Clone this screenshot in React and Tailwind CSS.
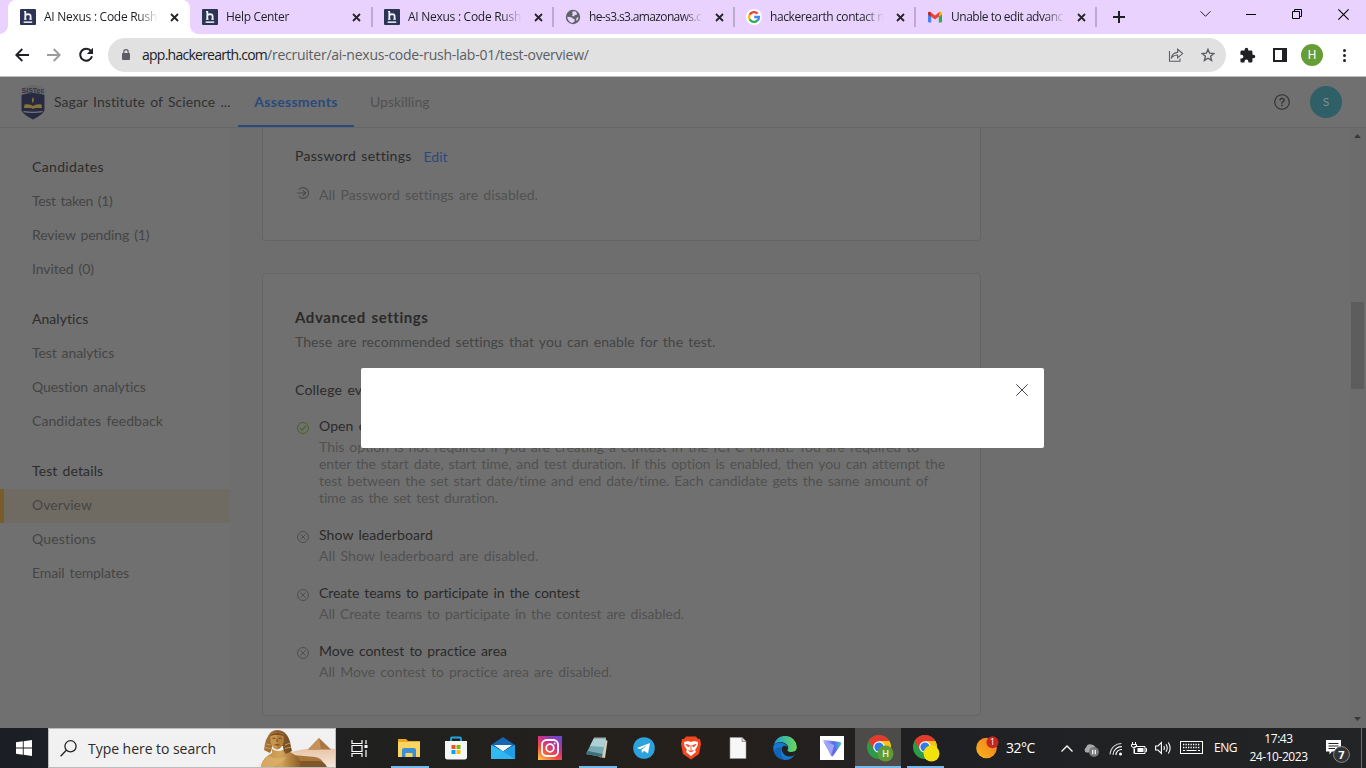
import React from "react";

const fontPage = "font-['Lato','Liberation_Sans',sans-serif] [word-spacing:1.5px] [font-variant-ligatures:none]";
const fontSys = "font-['Open_Sans','Noto_Sans',sans-serif]";

/* ---------- Browser chrome ---------- */

function HackerIcon() {
  return (
    <svg className="size-4 shrink-0" viewBox="0 0 16 16">
      <rect width="16" height="16" rx="1" fill="#2c3454" />
      <path d="M5.3 2.2V10.6M5.3 7Q5.6 5.2 8 5.1Q10.6 5.1 10.6 7.3V10.6" fill="none" stroke="#f4f0fb" strokeWidth="1.8" />
      <path d="M4 2.6H6M4 10.2H6.6M9.3 10.2H11.8" stroke="#f4f0fb" strokeWidth="1" />
      <rect x="3.6" y="12.4" width="8.6" height="1.5" fill="#f4f0fb" />
    </svg>
  );
}

function GlobeIcon() {
  return (
    <svg className="size-4 shrink-0" viewBox="0 0 16 16">
      <circle cx="8" cy="8" r="7.2" fill="#5f6368" />
      <path d="M2.2 7.8L6 8.2Q7.6 8.3 7.8 9.6L9.6 10.2V12.6L7.2 13.9Q3 13.4 2.2 7.8ZM8 2.2L10.8 2.6L12.2 5Q11.6 6.4 9.8 6L9.2 7.4L6.6 6.4L8 5.2L7 4ZM12 8.6L13.6 8.2Q13.2 10.8 11.8 12L11 10.4Z" fill="#e9d3fe" />
    </svg>
  );
}

function GoogleIcon() {
  return (
    <svg className="size-4 shrink-0" viewBox="0 0 16 16">
      <circle cx="8" cy="8" r="8" fill="#fff" />
      <g fill="none" strokeWidth="2.3">
        <path d="M11.6 4.6A5 5 0 0 0 3.6 5.7" stroke="#ea4335" />
        <path d="M3.6 5.7A5 5 0 0 0 3.6 10.3" stroke="#fbbc05" />
        <path d="M3.6 10.3A5 5 0 0 0 11.3 11.7" stroke="#34a853" />
        <path d="M11.3 11.7A5 5 0 0 0 13 8H8.2" stroke="#4285f4" />
      </g>
    </svg>
  );
}

function GmailIcon() {
  return (
    <svg className="size-4 shrink-0" viewBox="0 0 16 16">
      <path d="M1 4V12.4A1 1 0 0 0 2 13.4H4.2V6.4Z" fill="#4285f4" />
      <path d="M15 4V12.4A1 1 0 0 1 14 13.4H11.8V6.4Z" fill="#34a853" />
      <path d="M11.8 4V7.8L15 5.4V4A1.6 1.6 0 0 0 12.4 2.9Z" fill="#fbbc04" />
      <path d="M1 4V5.4L4.2 7.8V4L3.4 2.9A1.6 1.6 0 0 0 1 4Z" fill="#c5221f" />
      <path d="M3.2 2.8L8 6.5L12.8 2.8L11.8 7.8L8 10.6L4.2 7.8Z" fill="#ea4335" />
    </svg>
  );
}

const tabs = [
  { Icon: HackerIcon, text: "AI Nexus : Code Rush", w: "w-[182px]", track: "tracking-[-0.27px]", active: true },
  { Icon: HackerIcon, text: "Help Center", w: "w-[182px]", track: "tracking-[-0.33px]" },
  { Icon: HackerIcon, text: "AI Nexus : Code Rush", w: "w-[181px]", track: "tracking-[-0.27px]" },
  { Icon: GlobeIcon, text: "he-s3.s3.amazonaws.c", w: "w-[181px]", track: "tracking-[-0.63px]" },
  { Icon: GoogleIcon, text: "hackerearth contact n", w: "w-[181px]", track: "tracking-[-0.4px]" },
  { Icon: GmailIcon, text: "Unable to edit advanc", w: "w-[181px]", track: "tracking-[-0.48px]" },
];

function TabStrip() {
  return (
    <div className="flex h-[34px] shrink-0 bg-[#e9d3fe] pl-2">
      {tabs.map(({ Icon, text, w, active, track }, i) => (
        <div key={i} className={`relative flex h-full shrink-0 items-center pl-3 ${w} ${active ? "rounded-t-lg bg-white" : ""}`}>
          {active && (
            <>
              <span className="absolute bottom-0 -left-2 size-2 bg-[radial-gradient(circle_at_0_0,transparent_7.5px,white_8px)]" />
              <span className="absolute -right-2 bottom-0 size-2 bg-[radial-gradient(circle_at_100%_0,transparent_7.5px,white_8px)]" />
            </>
          )}
          <Icon />
          <span className={`ml-2 w-[114px] shrink-0 mask-r-from-82% text-[12px] whitespace-nowrap text-[#1f1f24] ${track}`}>{text}</span>
          <svg className="ml-[12px] size-[9px] shrink-0" viewBox="0 0 9 9">
            <path d="M1 1L8 8M8 1L1 8" stroke="#26242b" strokeWidth="1.8" />
          </svg>
          {i > 0 && <span className="absolute top-[7px] right-0 h-5 w-px translate-x-1/2 bg-[#8f829f]" />}
        </div>
      ))}
      <svg className="mt-[11px] ml-[17px] size-3" viewBox="0 0 12 12">
        <path d="M6 0V12M0 6H12" stroke="#1f1f24" strokeWidth="2" />
      </svg>
      <svg className="mt-[11px] ml-[75px] h-[6px] w-[11px]" viewBox="0 0 11 6">
        <path d="M.5 .3L5.5 5.3L10.5 .3" fill="none" stroke="#222" />
      </svg>
      <svg className="mt-[14px] ml-[35px] h-px w-[10px]" viewBox="0 0 10 1">
        <path d="M0 .5H10" stroke="#000" />
      </svg>
      <svg className="mt-[9px] ml-[36px] size-[10px]" viewBox="0 0 10 10">
        <path d="M.5 2.5H7.5V9.5H.5ZM2.5 2.5V.5H9.5V7.5H7.5" fill="none" stroke="#000" />
      </svg>
      <svg className="mt-[9px] ml-[36px] size-[11px]" viewBox="0 0 11 11">
        <path d="M.4 .4L10.6 10.6M10.6 .4L.4 10.6" stroke="#000" strokeWidth="1.1" />
      </svg>
    </div>
  );
}

function Toolbar() {
  return (
    <div className="flex h-[43px] shrink-0 items-center border-b border-[#bfc0c3] bg-white pl-[15px]">
      <svg className="h-[14px] w-[14px]" viewBox="0 0 14 14">
        <path d="M14 7H1.5M7.3 1L1.3 7L7.3 13" fill="none" stroke="#202124" strokeWidth="1.9" />
      </svg>
      <svg className="ml-[18px] h-[14px] w-[14px]" viewBox="0 0 14 14">
        <path d="M0 7H12.5M6.7 1L12.7 7L6.7 13" fill="none" stroke="#9b9b9e" strokeWidth="1.9" />
      </svg>
      <svg className="ml-[17px] size-4" viewBox="0 0 16 16">
        <path d="M13.1 4.2A6 6 0 1 0 14 9.3" fill="none" stroke="#202124" strokeWidth="2" />
        <path d="M15 .8V7H8.8Z" fill="#202124" />
      </svg>
      <div className="ml-[14px] flex h-[34px] w-[1118px] items-center rounded-full bg-[#e1e1e1] pl-[14px]">
        <svg className="-mt-px h-[11px] w-2" viewBox="0 0 8 11">
          <rect y="4" width="8" height="7" rx=".8" fill="#5b5e63" />
          <path d="M1.8 4.4V2.8A2.2 2.2 0 0 1 6.2 2.8V4.4" fill="none" stroke="#5b5e63" strokeWidth="1.2" />
        </svg>
        <span className="-mt-px ml-3 text-[14px] whitespace-nowrap text-[#5b5e63]">
          <span className="tracking-[-0.75px] text-[#202124]">app.hackerearth.com</span>
          <span className="tracking-[-0.25px]">/recruiter/ai-nexus-code-rush-lab-01/test-overview/</span>
        </span>
        <svg className="ml-auto h-[14px] w-4" viewBox="0 0 16 14">
          <path d="M1.5 3V13.3H12V10.5M3.6 9.6Q4.4 4.8 9.6 4.4V1.3L14.6 5.6L9.6 9.8V7Q6 6.9 3.6 9.6Z" fill="none" stroke="#5b5e63" strokeWidth="1.1" />
        </svg>
        <svg className="mr-[11px] ml-[17px] size-[14px]" viewBox="0 0 14 14">
          <path d="M7 1.4L8.6 5.2L12.8 5.6L9.6 8.3L10.6 12.4L7 10.2L3.4 12.4L4.4 8.3L1.2 5.6L5.4 5.2Z" fill="none" stroke="#5b5e63" strokeWidth="1.4" />
        </svg>
      </div>
      <svg className="ml-[13px] size-[17px]" viewBox="0 0 24 24">
        <path fill="#202124" d="M20.5 11H19V7a2 2 0 0 0-2-2h-4V3.500a2.500 2.500 0 0 0-5 0V5H4a2 2 0 0 0-2 2v3.800h1.500a2.700 2.700 0 0 1 0 5.400H2V20a2 2 0 0 0 2 2h3.800v-1.500a2.700 2.700 0 0 1 5.400 0V22H17a2 2 0 0 0 2-2v-4h1.500a2.500 2.500 0 0 0 0-5z" />
      </svg>
      <svg className="ml-[17px] size-[14px]" viewBox="0 0 14 14">
        <path d="M1 1H13V13H1Z" fill="none" stroke="#202124" strokeWidth="2" />
        <path d="M9 1H13V13H9Z" fill="#202124" />
      </svg>
      <span className="ml-[14px] flex size-[22px] items-center justify-center rounded-full bg-[#669d34] font-['Roboto',sans-serif] text-[12px] text-white">H</span>
      <svg className="ml-5 h-[13px] w-[3px]" viewBox="0 0 3 13">
        <g fill="#202124">
          <circle cx="1.5" cy="1.6" r="1.5" />
          <circle cx="1.5" cy="6.500" r="1.500" />
          <circle cx="1.500" cy="11.400" r="1.500" />
        </g>
      </svg>
    </div>
  );
}

/* ---------- Dimmed page ---------- */

function Crest() {
  return (
    <svg className="h-[36px] w-[24px]" viewBox="0 0 24 36">
      <path d="M1 5Q12 -3 23 5V27Q23 30 12 35Q1 30 1 27Z" fill="#67676c" />
      <path d="M.5 11Q12 7 23.500 11V26Q23 30 12 35.500Q1 30 .5 26Z" fill="#272a40" />
      <text x="12" y="8.800" textAnchor="middle" fontSize="7" fontWeight="700" fontFamily="Liberation Sans" fill="#34354a">SISTec</text>
      <path d="M12 13Q14 16 11.500 19Q10 16.500 12 13Z" fill="#8a7638" />
      <path d="M3.500 20.500Q9 19.500 12 22Q15 19.500 20.500 20.500L21 24H14L12 25L10 24H3Z" fill="#87733a" />
      <path d="M2.500 27.600Q12 29 21.500 27.600" stroke="#76777f" strokeWidth="1.300" fill="none" />
    </svg>
  );
}

function Header() {
  return (
    <div className="flex h-[51px] shrink-0 border-b border-[#666] bg-[#707070] pl-[21px] text-[14px] whitespace-nowrap">
      <div className="flex w-[217px] items-center">
        <Crest />
        <span className="-mt-[2px] ml-[9px] tracking-[0.08px] text-[#313131]">Sagar Institute of Science ...</span>
      </div>
      <div className="flex w-[116px] items-center justify-center border-b-2 border-[#294a7d] tracking-[0.28px] font-bold text-[#294a7d]">Assessments</div>
      <div className="ml-4 flex items-center pb-[2px] text-[#515151]">Upskilling</div>
      <svg className="mt-[17px] ml-auto size-4" viewBox="0 0 16 16">
        <circle cx="8" cy="8" r="7.300" fill="none" stroke="#303030" strokeWidth="1.100" />
        <path d="M5.800 6.400Q5.900 4.300 8 4.300Q10.200 4.300 10.200 6.200Q10.200 7.400 8 8.300V9.700" fill="none" stroke="#303030" strokeWidth="1.200" />
        <rect x="7.300" y="10.700" width="1.400" height="1.400" fill="#303030" />
      </svg>
      <span className="mt-[9px] mr-6 ml-5 flex size-8 items-center justify-center rounded-full bg-[#2f5f67] pb-px text-[12px] text-[#858b8c]">S</span>
    </div>
  );
}

const nav = [
  { title: "Candidates", ls: "tracking-[0.35px]", items: [["Test taken (1)", "tracking-[-0.3px]"], ["Review pending (1)", "tracking-[-0.1px]"], ["Invited (0)", "tracking-[-0.1px]"]] },
  { title: "Analytics", ls: "tracking-[0.05px]", items: [["Test analytics", "tracking-[-0.1px]"], ["Question analytics", "tracking-[-0.06px]"], ["Candidates feedback", "tracking-[0.08px]"]] },
  { title: "Test details", ls: "tracking-[0.1px]", items: [["Overview", "tracking-[0.05px]"], ["Questions", "tracking-[0.15px]"], ["Email templates", "tracking-[-0.1px]"]] },
];

function Sidebar() {
  return (
    <div className="flex w-[230px] shrink-0 flex-col gap-4 bg-[#707070] pt-[23px] text-[14px] leading-[31px] text-[#454545]">
      {nav.map(({ title, ls, items }) => (
        <div key={title}>
          <div className={`h-[34px] pl-8 text-[#2c2c2c] ${ls}`}>{title}</div>
          {items.map(([label, track]) =>
            label === "Overview" ? (
              <div key={label} className={`h-[34px] border-l-4 border-[#785c2b] bg-[#706b62] pl-7 ${track}`}>{label}</div>
            ) : (
              <div key={label} className={`h-[34px] pl-8 ${track}`}>{label}</div>
            )
          )}
        </div>
      ))}
    </div>
  );
}

function StateIcon({ on }) {
  return (
    <svg className="mt-[6px] size-3 shrink-0" viewBox="0 0 12 12">
      <circle cx="6" cy="6" r="5.500" fill="none" stroke={on ? "#46641f" : "#4f4f4f"} />
      {on ? <path d="M3.200 6.200L5.200 8.200L8.800 3.800" fill="none" stroke="#46641f" strokeWidth="1.200" /> : <path d="M3.500 3.500L8.500 8.500M8.500 3.500L3.500 8.500" stroke="#4f4f4f" />}
    </svg>
  );
}

function Setting({ on, title, titleTrack, children }) {
  return (
    <div className="flex pl-[2px]">
      <StateIcon on={on} />
      <div className="ml-[10px] whitespace-nowrap">
        <div className={`h-5 leading-[19px] text-[#2a2a2a] ${titleTrack}`}>{title}</div>
        <div className="mt-[2px] mb-px leading-[17px] text-[#515151]">{children}</div>
      </div>
    </div>
  );
}

function Main() {
  return (
    <div className="flex flex-1 flex-col overflow-hidden pl-8 text-[14px]">
      <div className="h-[113px] w-[719px] shrink-0 rounded-b border border-t-0 border-[#656567] bg-[#707070] pl-8 whitespace-nowrap">
        <div className="mt-[18px] flex h-5 leading-[20px]">
          <span className="tracking-[0.28px] text-[#2b2b2b]">Password settings</span>
          <span className="mt-px ml-[12px] text-[#294a7d]">Edit</span>
        </div>
        <div className="mt-[19px] flex text-[#515151]">
          <svg className="mt-[2px] ml-[2px] size-3" viewBox="0 0 12 12">
            <path d="M2 2.600A5.400 5.400 0 1 1 2 9.400M0 6H8.500M5.800 3.200L8.600 6L5.800 8.800" fill="none" stroke="#4a4a4a" strokeWidth="1.100" />
          </svg>
          <span className="ml-[10px] leading-5 tracking-[0.08px]">All Password settings are disabled.</span>
        </div>
      </div>
      <div className="mt-8 h-[443px] w-[719px] shrink-0 rounded border border-[#656567] bg-[#707070] pt-8 pl-8 whitespace-nowrap">
        <div className="h-6 text-[15px] leading-[22px] font-bold tracking-[0.57px] text-[#2a2a2a]">Advanced settings</div>
        <div className="h-6 leading-6 tracking-[0.06px] text-[#444]">These are recommended settings that you can enable for the test.</div>
        <div className="mt-6 h-6 leading-6 tracking-[0.2px] text-[#2b2b2b]">College ev</div>
        <div className="mt-[14px] flex flex-col gap-[18px]">
          <Setting on title="Open contest" titleTrack="tracking-[0.1px]">
            <div className="tracking-[-0.02px]">This option is not required if you are creating a contest in the ICPC format. You are required to</div>
            <div className="tracking-[-0.08px]">enter the start date, start time, and test duration. If this option is enabled, then you can attempt the</div>
            <div className="tracking-[-0.08px]">test between the set start date/time and end date/time. Each candidate gets the same amount of</div>
            <div className="tracking-[-0.13px]">time as the set test duration.</div>
          </Setting>
          <Setting title="Show leaderboard" titleTrack="tracking-[0.1px]">
            <div className="tracking-[0.08px]">All Show leaderboard are disabled.</div>
          </Setting>
          <Setting title="Create teams to participate in the contest" titleTrack="tracking-[-0.07px]">
            <div className="tracking-[-0.05px]">All Create teams to participate in the contest are disabled.</div>
          </Setting>
          <Setting title="Move contest to practice area" titleTrack="tracking-[-0.03px]">
            <div className="tracking-[0px]">All Move contest to practice area are disabled.</div>
          </Setting>
        </div>
      </div>
    </div>
  );
}

function Scrollbar() {
  return (
    <div className="flex w-4 shrink-0 flex-col items-center bg-[#6c6c6c] pt-[6px] pb-[7px]">
      <svg className="mr-px h-1 w-[7px]" viewBox="0 0 7 4"><path d="M0 4L3.500 0L7 4Z" fill="#393939" /></svg>
      <div className="mt-[164px] mr-px h-[87px] w-[13px] bg-[#5d5d5d]" />
      <svg className="mt-auto mr-px h-1 w-[7px]" viewBox="0 0 7 4"><path d="M0 0L3.500 4L7 0Z" fill="#393939" /></svg>
    </div>
  );
}

/* ---------- Taskbar ---------- */

function Sphinx() {
  return (
    <svg className="ml-auto h-[38px] w-[78px]" viewBox="0 0 78 38">
      <defs>
        <linearGradient id="sand" x1="0" x2="0" y1="0" y2="1"><stop offset="0" stopColor="#e6c3a6" /><stop offset="1" stopColor="#f7e6da" /></linearGradient>
        <linearGradient id="body" x1="0" x2="1"><stop offset="0" stopColor="#bd8c46" /><stop offset=".5" stopColor="#d3a45a" /><stop offset="1" stopColor="#8a5a26" /></linearGradient>
        <linearGradient id="cloth" x1="0" x2="1"><stop offset="0" stopColor="#a9783a" /><stop offset="1" stopColor="#6e4a22" /></linearGradient>
      </defs>
      <path d="M34 23Q56 17 78 20V38H0Q4 33 12 31Z" fill="url(#sand)" />
      <path d="M62 9L74 20.500H51Z" fill="#a97642" />
      <path d="M62 9L64 20.500H51Z" fill="#c4925a" />
      <path d="M36 26L58 28Q66 29 68 38H34Z" fill="#a8753a" />
      <path d="M32 32H62Q68 33 70 38H30Z" fill="#7f5729" />
      <path d="M15 20Q21 24 28 20L38 26Q44 30 44 38H4Q5 29 15 24Z" fill="url(#body)" />
      <path d="M14 3Q20 -1 27 3Q33 8 34 18L35 22L29 25Q26 22 26 17H15Q15 21 13 24L7 21Q8 9 14 3Z" fill="url(#cloth)" />
      <path d="M9 15L14 16M8 18.500L14 19.500M33 14L28 16M34 18L28 19.500" stroke="#cf9e58" strokeWidth=".9" />
      <path d="M13.500 5Q20 2.500 26.500 5V13Q25 19.500 20 20.500Q15 19.500 13.500 13Z" fill="#c9964f" />
      <path d="M20 4Q25 4 26.500 5V13Q25 19.500 20 20.500Z" fill="#a3702f" opacity=".55" />
      <path d="M13.500 5.500Q20 2.500 26.500 5.500V7Q20 4.500 13.500 7Z" fill="#75481d" />
      <path d="M15.500 9.300H18.500M21.500 9.300H24.500M20 10V13M17.800 15.800H22.300" stroke="#6c431c" strokeWidth="1" />
      <path d="M4 38Q6 30 12 27Q20 31 30 28Q24 35 16 38Z" fill="#deb06a" opacity=".75" />
    </svg>
  );
}

function Chrome({ badge, letter }) {
  return (
    <svg className="h-[28px] w-[28px]" viewBox="0 0 28 28">
      <circle cx="12" cy="12" r="12" fill="#2b9b47" />
      <path d="M12 12L1.600 6A12 12 0 0 1 22.400 6Z" fill="#e33b2e" />
      <path d="M12 6H22.400A12 12 0 0 1 12 24L17 14Z" fill="#fbc116" />
      <path d="M1.600 6L7 15L12 6Z" fill="#e33b2e" />
      <circle cx="12" cy="12" r="5.800" fill="#fff" />
      <circle cx="12" cy="12" r="4.600" fill="#2f7de9" />
      <circle cx="18.500" cy="18.500" r="8" fill={badge} />
      {letter && <text x="18.500" y="22" textAnchor="middle" fontSize="9.500" fontWeight="500" fontFamily="Roboto" fill="#e9f3df">{letter}</text>}
    </svg>
  );
}

const svgCls = "size-6";
const apps = [
  { k: "files", bar: true, el: (
    <svg className="h-[20px] w-[22px]" viewBox="0 0 22 20"><path d="M0 1H8L10 3H22V18H0Z" fill="#e8a91c" /><path d="M0 4H22V19H0Z" fill="#fcd462" /><path d="M4 19V12Q4 10 6 10H16Q18 10 18 12V19H14.500V15H7.500V19Z" fill="#3b8ed8" /></svg>) },
  { k: "store", el: (
    <svg className={svgCls} viewBox="0 0 24 24"><path d="M7 6V2.500Q7 1.500 8 1.500H16Q17 1.500 17 2.500V6" fill="none" stroke="#22a8e0" strokeWidth="1.800" /><path d="M1 5H23V21Q23 23.500 20.500 23.500H3.500Q1 23.500 1 21Z" fill="#f5f6f8" /><path d="M7.500 9H11.500V13H7.500Z" fill="#f25022" /><path d="M12.500 9H16.500V13H12.500Z" fill="#7fba00" /><path d="M7.500 14H11.500V18H7.500Z" fill="#00a4ef" /><path d="M12.500 14H16.500V18H12.500Z" fill="#ffb900" /></svg>) },
  { k: "mail", el: (
    <svg className={svgCls} viewBox="0 0 24 24"><path d="M0 9L12 1L24 9V12H0Z" fill="#1565b5" /><path d="M3 9H21L12 15.500Z" fill="#f2f6f9" /><path d="M0 9L12 15.500L24 9V23H0Z" fill="#29b0ef" /><path d="M24 9L12 15.500L5 23H24Z" fill="#1f9ee5" /><path d="M0 9L12 15.500L24 23H0Z" fill="#35bdf5" opacity=".8" /></svg>) },
  { k: "insta", el: (
    <svg className={svgCls} viewBox="0 0 24 24"><defs><linearGradient id="ig" x1=".1" y1="1" x2=".8" y2="0"><stop offset="0" stopColor="#fdc04f" /><stop offset=".35" stopColor="#f2513e" /><stop offset=".65" stopColor="#c8308c" /><stop offset="1" stopColor="#6b48cf" /></linearGradient></defs><rect width="24" height="24" fill="url(#ig)" /><rect x="4" y="4" width="16" height="16" rx="4.500" fill="none" stroke="#fff" strokeWidth="1.800" /><circle cx="12" cy="12" r="3.800" fill="none" stroke="#fff" strokeWidth="1.800" /><circle cx="16.600" cy="7.400" r="1" fill="#fff" /></svg>) },
  { k: "notes", bar: true, el: (
    <svg className={svgCls} viewBox="0 0 24 24"><path d="M20 3L22.500 5L20 22L14 21Z" fill="#d6cdb8" /><path d="M9 2H21L17 21L1 18Z" fill="#76a9b1" /><path d="M9 2H21L19 11L5 10Z" fill="#acd0d5" /><path d="M1 18L17 21L17.500 18L3 15Z" fill="#3f6f78" /><path d="M9 1.800H21" stroke="#777" strokeWidth="1.200" /></svg>) },
  { k: "telegram", el: (
    <svg className={svgCls} viewBox="0 0 24 24"><circle cx="12" cy="12" r="10.800" fill="#2ca3dc" /><path d="M5 12L18 7L16 17.500L12 14.800L10 17L9.500 13.800L15 9.300L8 13.200Z" fill="#fff" /></svg>) },
  { k: "brave", el: (
    <svg className={svgCls} viewBox="0 0 24 24"><path d="M7 .5H17L19 3H21L22 8L20 18L12 23.500L4 18L2 8L3 3H5Z" fill="#f4461f" /><path d="M5 6L9 5L12 6L15 5L19 6L18.500 10L16 14L17 16L12 20L7 16L8 14L5.500 10Z" fill="#fff" /><path d="M7 8.500L10.500 9.500L9.500 11ZM17 8.500L13.500 9.500L14.500 11ZM12 9V14M9.500 14.500L12 16L14.500 14.500" fill="#f4461f" stroke="#f4461f" strokeWidth=".9" /></svg>) },
  { k: "doc", el: (
    <svg className={svgCls} viewBox="0 0 24 24"><path d="M4 1.500H16L20 5.500V22.500H4Z" fill="#f7f7f7" stroke="#999" strokeWidth=".6" /><path d="M16 1.500V5.500H20" fill="#ddd" stroke="#888" strokeWidth=".8" /></svg>) },
  { k: "edge", el: (
    <svg className={svgCls} viewBox="0 0 24 24"><defs><linearGradient id="ed" x1="0" x2="1"><stop offset="0" stopColor="#1a9bdc" /><stop offset="1" stopColor="#6bdc55" /></linearGradient></defs><path d="M.6 9.500A11.700 11.700 0 0 1 23.800 11Q24 16 18.500 16Q14.500 16 14.500 14Q16 12 14.500 9.500Q12 6 7.500 6Q3 6 .6 9.500Z" fill="url(#ed)" /><path d="M.4 10Q3 6 8 6.500Q14 7.500 14.500 12Q13.500 9.800 11.500 9.800Q8 10.500 9 15Q11 20.500 17 20.500Q20 20.500 22 18Q19 24 12 24A12 12 0 0 1 .4 10Z" fill="#1678cf" /><path d="M9 12Q6 18 11 23.900Q3 23 .8 16Q2 10 9 12Z" fill="#0f57a5" opacity=".6" /></svg>) },
  { k: "vpn", el: (
    <svg className={svgCls} viewBox="0 0 24 24"><defs><linearGradient id="vp" x1="0" x2="1"><stop offset="0" stopColor="#c4c6f9" /><stop offset=".6" stopColor="#5a62ee" /><stop offset="1" stopColor="#4acfc1" /></linearGradient></defs><rect width="24" height="24" fill="#fff" /><path d="M3 4.500Q3 3.500 5 4L20 6Q22 6.500 21 8.500L13 20Q12 21 11 19.500Z" fill="url(#vp)" /><path d="M3.500 6Q12 8 14.500 9L11 19Z" fill="#9ea3f5" /></svg>) },
];

function Taskbar() {
  return (
    <div className={`flex h-10 shrink-0 bg-[linear-gradient(90deg,#1b1f25_0%,#20211f_28%,#251f1b_52%,#1f2023_70%,#232425_100%)] text-white ${fontSys}`}>
      <div className="flex w-12 shrink-0 items-center justify-center">
        <svg className="size-4" viewBox="0 0 16 16"><path d="M0 2.300L6.800 1.300V7.500H0ZM7.700 1.200L16 0V7.500H7.700ZM0 8.500H6.800V14.700L0 13.700ZM7.700 8.500H16V16L7.700 14.800Z" fill="#fff" /></svg>
      </div>
      <div className="flex w-[288px] shrink-0 items-center overflow-hidden border border-[#bcbcbc] bg-[#f1f1f1] pl-[11px]">
        <svg className="size-[17px]" viewBox="0 0 17 17"><circle cx="10.500" cy="6.300" r="5.600" fill="none" stroke="#222" strokeWidth="1.300" /><path d="M6.300 10.300L.6 16.200" stroke="#222" strokeWidth="1.300" /></svg>
        <span className="ml-[11px] text-[14px] whitespace-nowrap text-[#2b2b2b] tracking-[-0.04px]">Type here to search</span>
        <Sphinx />
      </div>
      <div className="flex w-[50px] shrink-0 items-center justify-center pr-[3px]">
        <svg className="size-[17px]" viewBox="0 0 17 17"><path d="M1 0V3.500H11V0M1 17V13.500H11V17M1 5.500H11V11.500H1ZM15 0V4M15 10V17" fill="none" stroke="#fff" strokeWidth="1.200" /><rect x="13.500" y="5" width="3" height="3" fill="#fff" /></svg>
      </div>
      {apps.map(({ k, bar, el }) => (
        <div key={k} className="relative flex w-[47px] shrink-0 items-center justify-center pr-px">
          {el}
          {bar && <span className="absolute bottom-0 left-[5px] h-[2px] w-[38px] bg-[#76b9ed]" />}
        </div>
      ))}
      <div className="-ml-px flex w-[46px] shrink-0 flex-col items-center justify-end bg-[#4c4b49]">
        <div className="mb-[3px] pl-[5px]"><Chrome badge="#5f9a35" letter="H" /></div>
        <span className="h-[2px] w-full bg-[#76b9ed]" />
      </div>
      <div className="flex w-[46px] shrink-0 flex-col items-center justify-end pl-[2px]">
        <div className="mb-[3px] pl-[3px]"><Chrome badge="#f3e10b" /></div>
        <span className="h-[2px] w-[37px] bg-[#76b9ed]" />
      </div>
      <div className="ml-[29px] flex flex-1 items-center">
        <svg className="-mt-px h-[23px] w-[23px]" viewBox="0 0 23 23"><defs><linearGradient id="sun" x1="0" y1="1" x2="1" y2="0"><stop offset="0" stopColor="#fbb61e" /><stop offset="1" stopColor="#f07a1b" /></linearGradient></defs><circle cx="10.500" cy="12" r="10.300" fill="url(#sun)" /><circle cx="16.500" cy="6.200" r="6" fill="#c4271f" /><text x="16.400" y="9.300" fontSize="8.500" textAnchor="middle" fontFamily="Open Sans" fill="#fff">1</text></svg>
        <span className="-mt-px ml-[7px] w-[48px] text-[14px] tracking-[-0.46px]">32°C</span>
        <svg className="ml-[7px] h-[7px] w-[12px]" viewBox="0 0 12 7"><path d="M.5 6.500L6 1L11.500 6.500" fill="none" stroke="#fff" strokeWidth="1.300" /></svg>
        <svg className="mt-1 ml-[10px] h-[14px] w-[16px]" viewBox="0 0 16 14"><path d="M3 9.500A3 3 0 0 1 3 4.500Q4.500 0 8.500 1.500Q12 2 12.500 5V9.500Z" fill="#a9a9a9" /><circle cx="11" cy="9" r="5" fill="#777" /><path d="M9.700 6.800V11.200M12.300 6.800V11.200" stroke="#fff" strokeWidth="1.200" /></svg>
        <svg className="mt-[2px] ml-[10px] size-[14px]" viewBox="0 0 14 14"><g fill="none" stroke="#fff" strokeWidth="1.100"><path d="M1 12.500A11.500 11.500 0 0 1 12.500 1.500" opacity=".75" /><path d="M4 12.800A8.500 8.500 0 0 1 12.800 4.600" /><path d="M7 13A5.500 5.500 0 0 1 13 7.500" /></g><circle cx="11.500" cy="12" r="1.500" fill="#fff" /></svg>
        <svg className="ml-[8px] h-[13px] w-[16px]" viewBox="0 0 16 13"><path d="M3.500 4.500H14V11.500H3.500V7M14.500 6.500H15.500V9.500H14.500M1.500 0V2M4.500 0V2M.5 2.500H5.500V4Q5.500 5.500 3 5.500Q.5 5.500 .5 4ZM3 6V11.500" fill="none" stroke="#fff" /><path d="M6.500 6H12.500V10H6.500Z" fill="#fff" /></svg>
        <svg className="ml-[8px] h-[14px] w-[17px]" viewBox="0 0 17 14"><g fill="none" stroke="#fff" strokeWidth="1.100"><path d="M.6 5H3L6.400 1.500V12.500L3 9H.6Z" /><path d="M8.800 5Q10 7 8.800 9M11 3.200Q13.400 7 11 10.800M13.300 1.500Q17 7 13.300 12.500" /></g></svg>
        <svg className="-mt-px ml-[8px] h-[13px] w-[23px]" viewBox="0 0 23 13"><rect x=".5" y=".5" width="22" height="12" fill="none" stroke="#fff" /><path d="M3 3.500H20M3 6.500H20" stroke="#fff" strokeDasharray="1.300 1.200" strokeWidth="1.300" /><path d="M3 9.500H5M6.500 9.500H16.500M18 9.500H20" stroke="#fff" /></svg>
        <span className="-mt-px ml-[11px] w-[24px] text-[12px] tracking-[-0.48px]">ENG</span>
        <div className="ml-[8px] flex w-[65px] flex-col items-center text-[12px] leading-[18px] tracking-[-0.45px]">
          <span>17:43</span>
          <span>24-10-2023</span>
        </div>
        <svg className="mt-[6px] ml-[14px] h-[25px] w-[25px]" viewBox="0 0 25 25"><path d="M1 1H16V12.500H7L4.500 15.500V12.500H1Z" fill="#fff" /><path d="M3.500 4.500H13.500M3.500 7H13.500M3.500 9.500H10" stroke="#232425" strokeWidth="1" /><circle cx="16.500" cy="15.500" r="7.900" fill="#333435" stroke="#8b8b8b" /><text x="16.500" y="19.500" fontSize="11" fontWeight="700" textAnchor="middle" fontFamily="Open Sans" fill="#fff">7</text></svg>
        <span className="mr-[4px] ml-auto h-10 w-px bg-[#6b6b6b]" />
      </div>
    </div>
  );
}

export default function App() {
  return (
    <div className="relative flex h-[768px] w-[1366px] flex-col overflow-hidden bg-[#6f6f6f]">
      <div className={`flex flex-col ${fontSys}`}>
        <TabStrip />
        <Toolbar />
      </div>
      <div className={`flex min-h-0 flex-1 flex-col ${fontPage}`}>
        <Header />
        <div className="flex min-h-0 flex-1 bg-[#6e6e6e]">
          <Sidebar />
          <Main />
          <Scrollbar />
        </div>
      </div>
      <Taskbar />
      <div className="absolute top-[368px] left-[361px] flex h-20 w-[683px] justify-end rounded-[2px] bg-white pt-4 pr-4">
        <svg className="size-3" viewBox="0 0 12 12"><path d="M.3 .3L11.700 11.700M11.700 .3L.3 11.700" stroke="#454b57" /></svg>
      </div>
    </div>
  );
}
